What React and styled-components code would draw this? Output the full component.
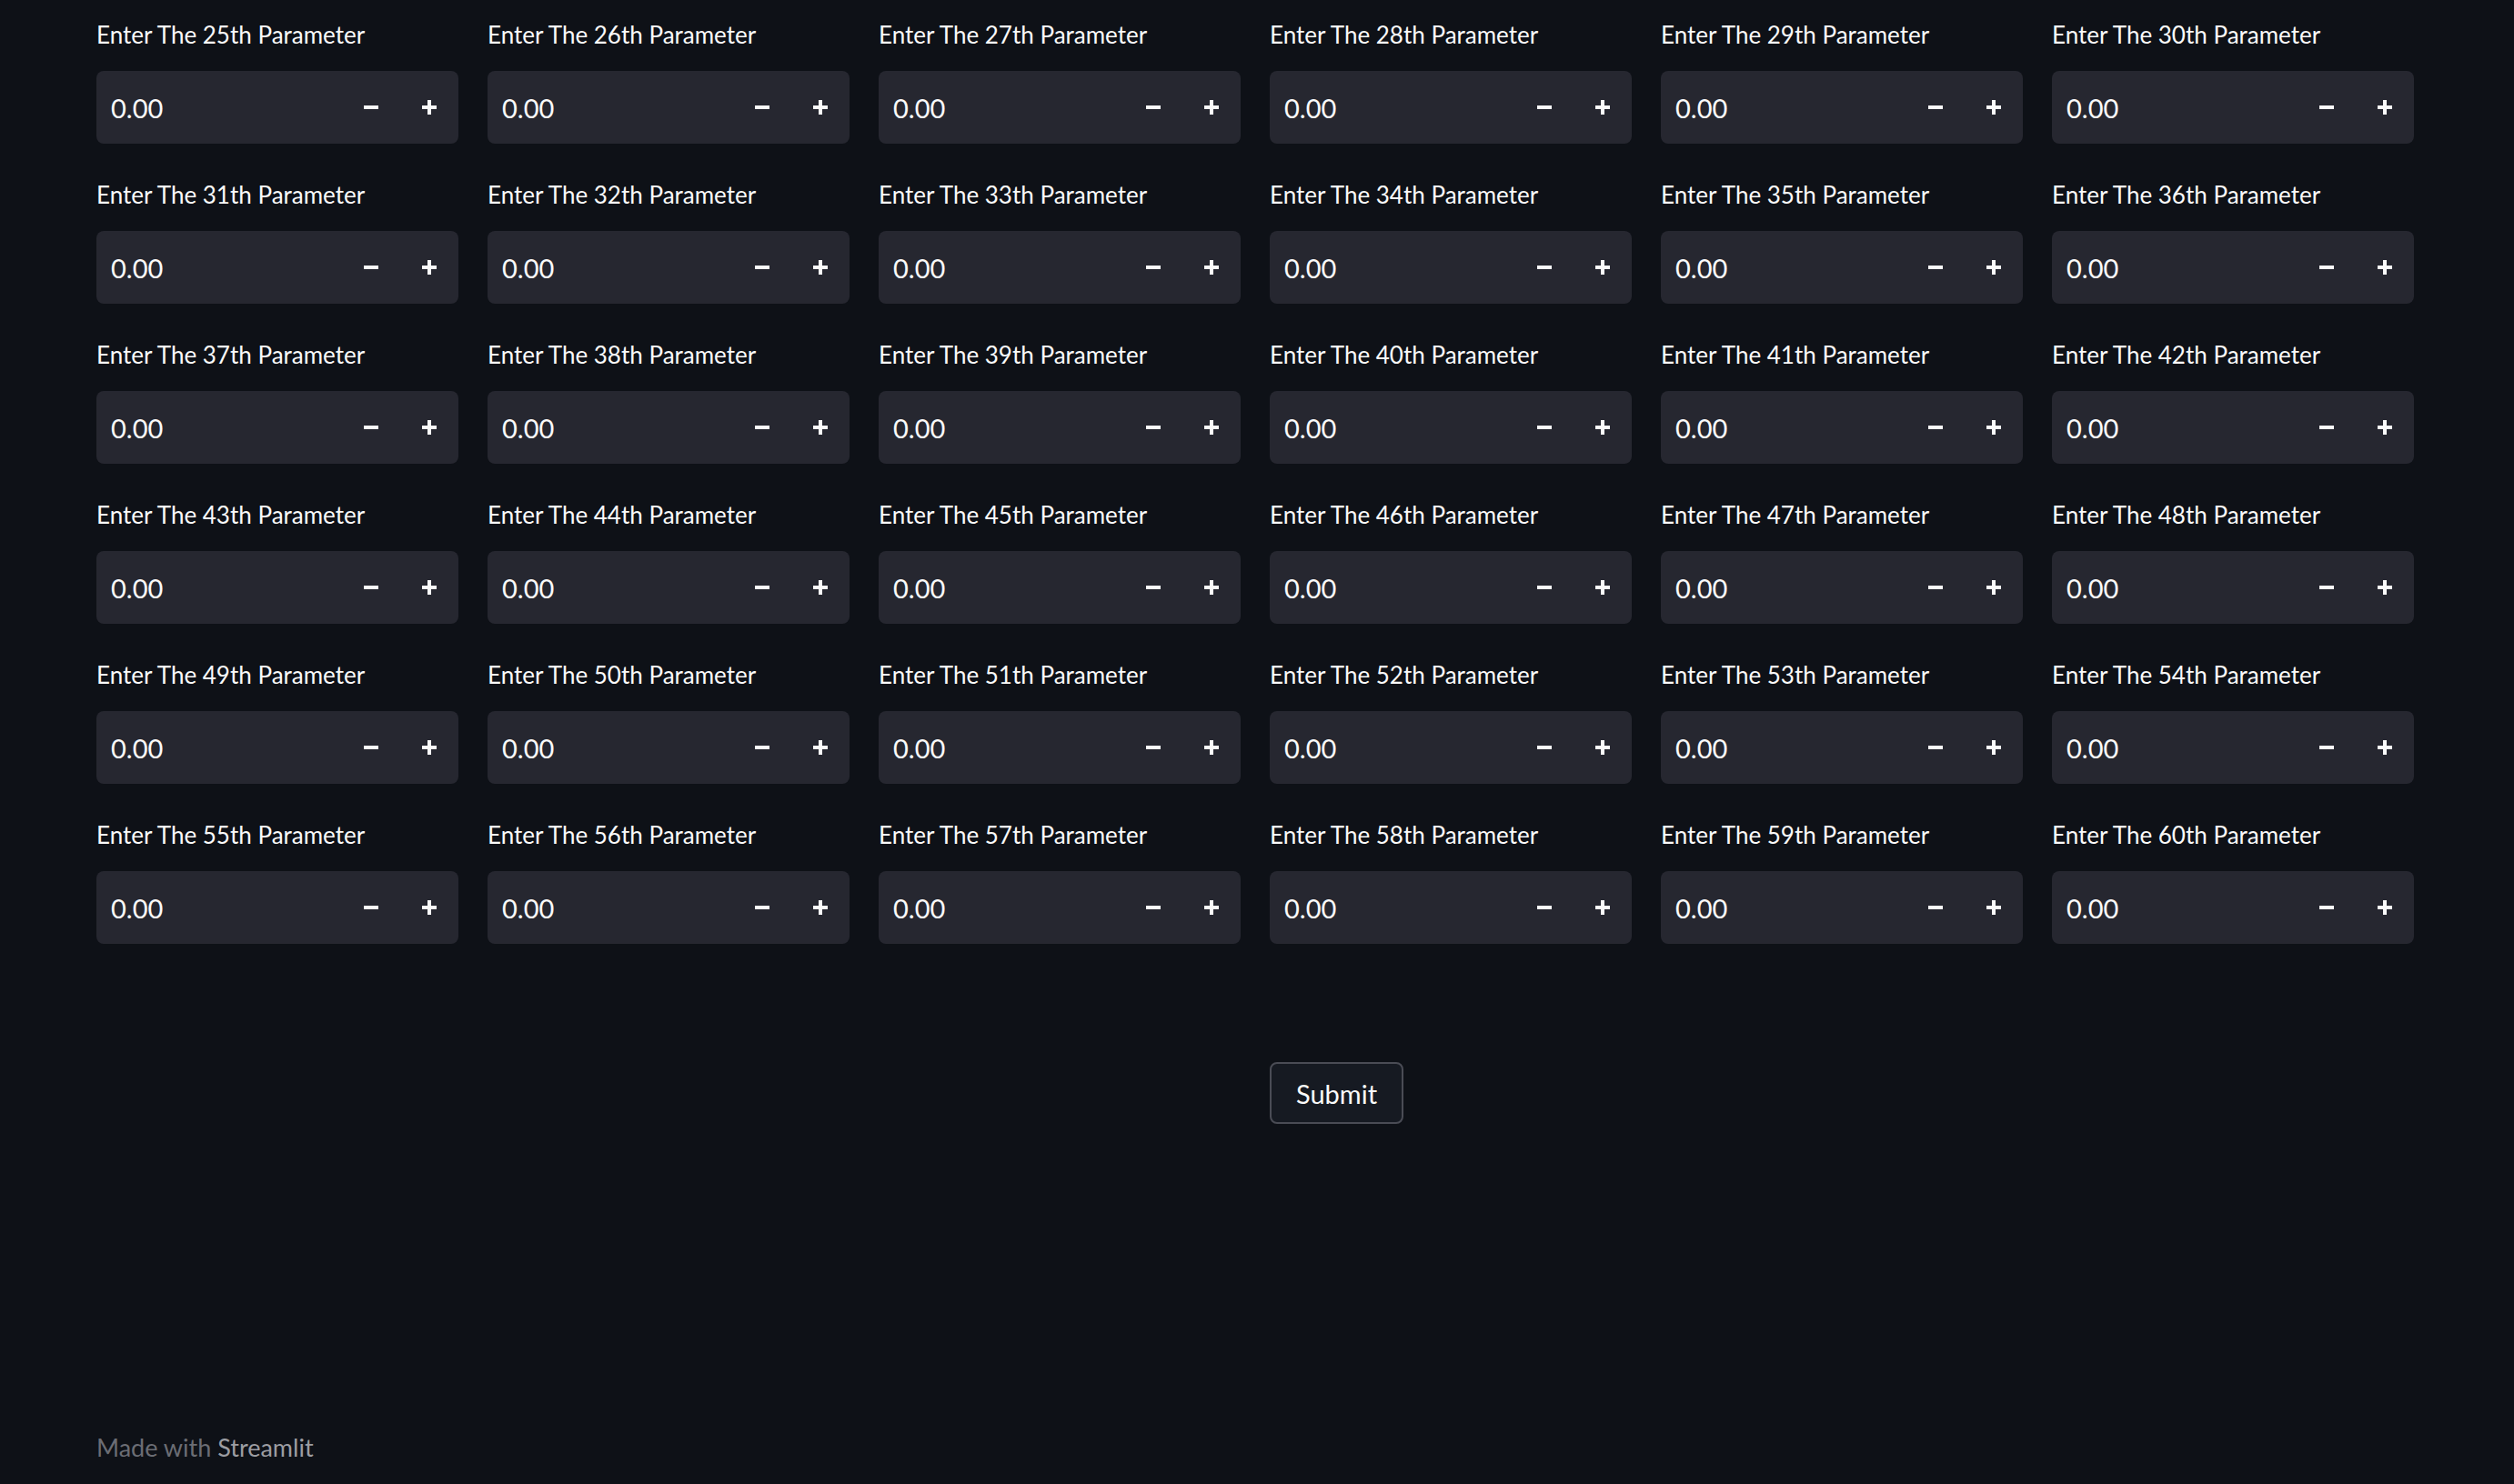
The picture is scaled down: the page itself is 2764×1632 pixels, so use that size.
import React from 'react';
import styled, { createGlobalStyle } from 'styled-components';

const GlobalStyle = createGlobalStyle`
  html, body {
    margin: 0;
    padding: 0;
    background: #0e1117;
  }
  body {
    font-family: "Lato", "Open Sans", sans-serif;
    color: #fafafa;
  }
`;

const Page = styled.div`
  width: 2764px;
  height: 1632px;
  box-sizing: border-box;
  padding: 16px 110px 0 106px;
  display: flex;
  flex-direction: column;
`;

const Grid = styled.div`
  display: grid;
  grid-template-columns: repeat(6, 398px);
  column-gap: 32px;
  row-gap: 34px;
`;

const Field = styled.div`
  display: flex;
  flex-direction: column;
`;

const Label = styled.label`
  font-size: 26px;
  line-height: 44px;
  height: 44px;
  color: #fafafa;
  margin-bottom: 18px;
  white-space: nowrap;
`;

const NumberBox = styled.div`
  height: 80px;
  border-radius: 8px;
  background: #262730;
  display: flex;
  align-items: center;
`;

const Value = styled.span`
  flex: 1;
  padding-left: 16px;
  font-size: 29px;
  color: #fafafa;
`;

const StepButton = styled.button`
  width: 64px;
  height: 80px;
  border: none;
  background: transparent;
  padding: 0;
  display: flex;
  align-items: center;
  justify-content: center;
  color: #fafafa;
  cursor: pointer;
`;

const SubmitRow = styled.div`
  display: grid;
  grid-template-columns: repeat(6, 398px);
  column-gap: 32px;
  margin-top: 130px;
`;

const SubmitButton = styled.button`
  grid-column: 4;
  justify-self: start;
  width: 147px;
  height: 68px;
  border-radius: 8px;
  border: 2px solid #4a4c55;
  background: #161a22;
  color: #fafafa;
  font-family: "Lato", "Open Sans", sans-serif;
  font-size: 29px;
  cursor: pointer;
`;

const Footer = styled.footer`
  margin-top: auto;
  padding-bottom: 24px;
  font-size: 27px;
  color: #6b6d74;
  a {
    color: #9c9da2;
    text-decoration: none;
  }
`;

const Minus = () => (
  <svg width="16" height="16" viewBox="0 0 16 16">
    <rect x="0" y="6" width="16" height="4" fill="currentColor" />
  </svg>
);

const Plus = () => (
  <svg width="16" height="16" viewBox="0 0 16 16">
    <rect x="0" y="6" width="16" height="4" fill="currentColor" />
    <rect x="6" y="0" width="4" height="16" fill="currentColor" />
  </svg>
);

const params = Array.from({ length: 36 }, (_, i) => i + 25);

export default function App() {
  return (
    <>
      <GlobalStyle />
      <Page>
        <Grid>
          {params.map((n) => (
            <Field key={n}>
              <Label>Enter The {n}th Parameter</Label>
              <NumberBox>
                <Value>0.00</Value>
                <StepButton aria-label="decrement"><Minus /></StepButton>
                <StepButton aria-label="increment"><Plus /></StepButton>
              </NumberBox>
            </Field>
          ))}
        </Grid>
        <SubmitRow>
          <SubmitButton>Submit</SubmitButton>
        </SubmitRow>
        <Footer>
          Made with <a href="#">Streamlit</a>
        </Footer>
      </Page>
    </>
  );
}
